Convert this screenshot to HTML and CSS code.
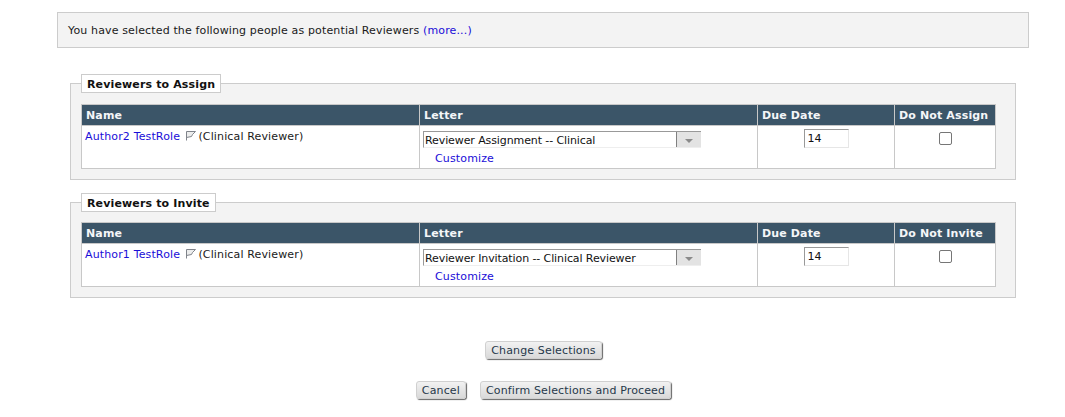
FILE: index.html
```html
<!DOCTYPE html>
<html lang="en">
<head>
<meta charset="utf-8">
<title>Reviewers</title>
<link rel="stylesheet" href="styles.css">
</head>
<body>
<div class="notice">You have selected the following people as potential Reviewers <a href="#">(more...)</a></div>

<fieldset class="group first">
  <legend>Reviewers to Assign</legend>
  <table class="grid">
    <thead>
      <tr><th class="c-name">Name</th><th class="c-letter">Letter</th><th class="c-due">Due Date</th><th class="c-no">Do Not Assign</th></tr>
    </thead>
    <tbody>
      <tr>
        <td class="name-cell"><a href="#">Author2 TestRole</a> <svg class="flag" width="11" height="10" viewBox="0 0 11 10"><path d="M1.5 9.5V.5H10.5L7.5 3.5 6.5 5.5 1.5 6.5" fill="#eceded" stroke="#7f838a"/></svg> (Clinical Reviewer)</td>
        <td class="letter-cell">
          <div class="combo"><span class="combo-text">Reviewer Assignment -- Clinical</span><span class="combo-btn"><span class="arrow"></span></span></div>
          <a class="customize" href="#">Customize</a>
        </td>
        <td class="center"><input class="due" type="text" value="14"></td>
        <td class="center"><span class="check"></span></td>
      </tr>
    </tbody>
  </table>
</fieldset>

<fieldset class="group second">
  <legend>Reviewers to Invite</legend>
  <table class="grid">
    <thead>
      <tr><th class="c-name">Name</th><th class="c-letter">Letter</th><th class="c-due">Due Date</th><th class="c-no">Do Not Invite</th></tr>
    </thead>
    <tbody>
      <tr>
        <td class="name-cell"><a href="#">Author1 TestRole</a> <svg class="flag" width="11" height="10" viewBox="0 0 11 10"><path d="M1.5 9.5V.5H10.5L7.5 3.5 6.5 5.5 1.5 6.5" fill="#eceded" stroke="#7f838a"/></svg> (Clinical Reviewer)</td>
        <td class="letter-cell">
          <div class="combo"><span class="combo-text">Reviewer Invitation -- Clinical Reviewer</span><span class="combo-btn"><span class="arrow"></span></span></div>
          <a class="customize" href="#">Customize</a>
        </td>
        <td class="center"><input class="due" type="text" value="14"></td>
        <td class="center"><span class="check"></span></td>
      </tr>
    </tbody>
  </table>
</fieldset>

<div class="actions">
  <div class="action-row"><button class="btn" type="button">Change Selections</button></div>
  <div class="action-row"><button class="btn" type="button">Cancel</button><button class="btn" type="button">Confirm Selections and Proceed</button></div>
</div>
</body>
</html>
```
FILE: styles.css
```css
html, body { margin: 0; padding: 0; background: #fff; }
body {
  font-family: "DejaVu Sans", Verdana, sans-serif;
  font-size: 11px;
  line-height: 14px;
  letter-spacing: .14px;
  color: #1a1a1a;
  height: 417px;
  overflow: hidden;
}
a { color: #1a0dd8; text-decoration: none; }

.notice {
  margin: 12px 36px 0 57px;
  height: 34px;
  padding: 0 10px;
  line-height: 35px;
  background: #f3f3f3;
  border: 1px solid #ccc;
}

.group {
  margin: 26px 49px 0 70px;
  padding: 0 19px 10px 10px;
  min-width: 0;
  background: #f3f3f3;
  border: 1px solid #ccc;
}
.group + .group { margin-top: 13px; }

.group legend {
  margin: 0;
  padding: 0 5px;
  height: 17px;
  line-height: 19px;
  background: #fff;
  border: 1px solid #ccc;
  font-weight: bold;
  color: #111;
}

.grid {
  width: 915px;
  margin-top: 11px;
  border-collapse: collapse;
  table-layout: fixed;
  background: #fff;
}
.second .grid { margin-top: 10px; }
.grid th, .grid td { border: 1px solid #c8c8c8; }
.grid th {
  height: 19px;
  padding: 1px 4px 0;
  background: #3b5568;
  color: #f4f6f8;
  font-weight: bold;
  text-align: left;
  white-space: nowrap;
}
.grid td { padding: 3px; vertical-align: top; }
.c-name { width: 329px; }
.c-letter { width: 329px; }
.c-due { width: 128px; }
.c-no { width: 92px; }

.grid .name-cell { padding-top: 4px; }
.flag { vertical-align: -1px; margin: 0 -1px 0 1px; }

.grid .letter-cell { padding: 5px 3px 2px; }
.combo {
  display: flex;
  width: 278px;
  height: 17px;
  box-sizing: border-box;
  border-top: 1px solid #999;
  border-left: 1px solid #999;
  border-bottom: 1px solid #eee;
}
.combo-text {
  flex: 1;
  padding-left: 1px;
  line-height: 17px;
  letter-spacing: -.1px;
  color: #111;
  white-space: nowrap;
}
.combo-btn {
  width: 24px;
  display: flex;
  align-items: center;
  justify-content: center;
  background: #e3e3e3;
  border-left: 1px solid #808080;
}
.arrow {
  width: 0;
  height: 0;
  margin-top: 3px;
  border-left: 4px solid transparent;
  border-right: 4px solid transparent;
  border-top: 4px solid #8a8a8a;
}
.customize { display: block; margin: 4px 0 0 12px; }

.center { text-align: center; }
.due {
  display: block;
  box-sizing: border-box;
  width: 45px;
  height: 19px;
  margin: 0 auto;
  padding: 0 3px;
  font: 11px "DejaVu Sans", Verdana, sans-serif;
  color: #111;
  background: #fff;
  border: 1px solid #e6e6e6;
  border-top-color: #999;
  border-left-color: #999;
  outline: none;
}
.check {
  display: block;
  box-sizing: border-box;
  width: 13px;
  height: 13px;
  margin: 3px auto 0;
  background: #fff;
  border: 1px solid #767676;
  border-radius: 2px;
}

.actions { margin-top: 43px; padding-left: 22px; }
.action-row {
  display: flex;
  justify-content: center;
  gap: 14px;
  height: 18px;
  margin-bottom: 22px;
}
.btn {
  box-sizing: border-box;
  height: 18px;
  padding: 0 5px;
  font: 11px "DejaVu Sans", Verdana, sans-serif;
  letter-spacing: .14px;
  color: #26384a;
  background: linear-gradient(#f2f2f2, #d9d9d9);
  border: 1px solid #d0d0d0;
  border-radius: 3px;
  box-shadow: 1px 1px 1px #666;
  white-space: nowrap;
}
```
